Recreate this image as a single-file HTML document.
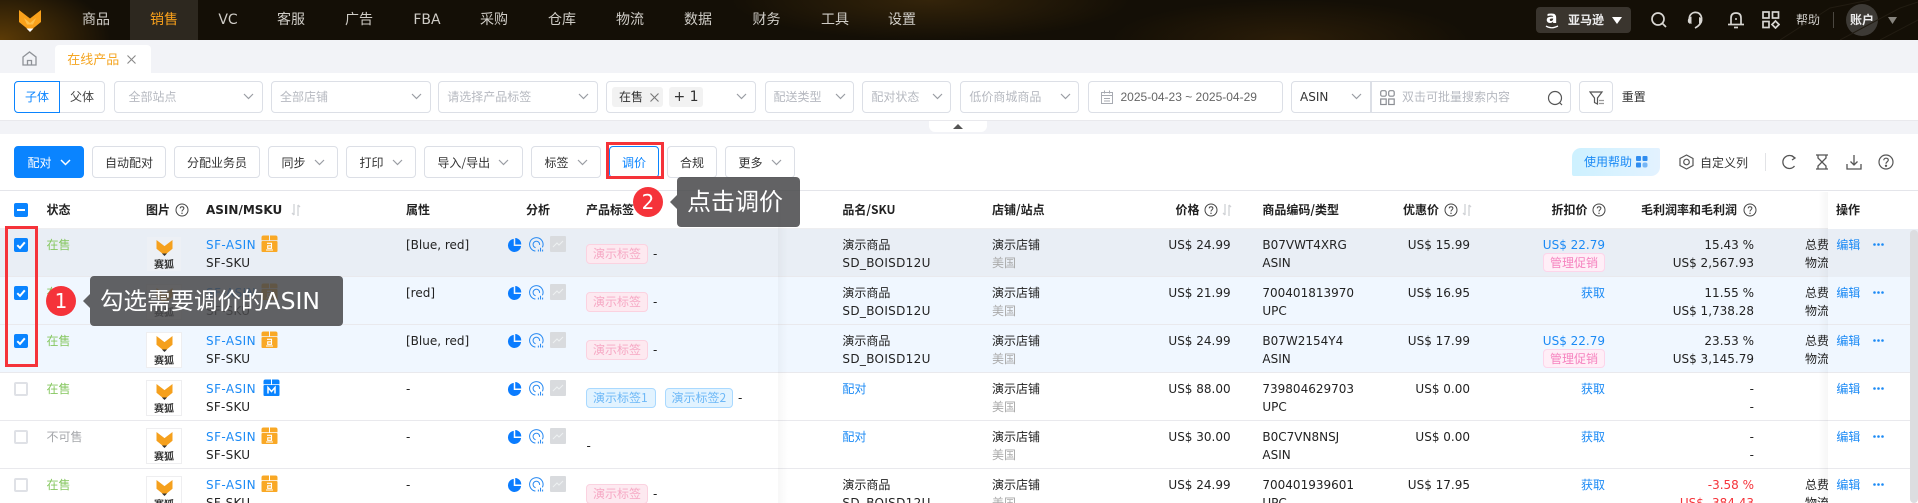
<!DOCTYPE html>
<html lang="zh">
<head>
<meta charset="utf-8">
<title>在线产品</title>
<style>
*{box-sizing:border-box}
html,body{margin:0;padding:0}
body{position:relative;width:1918px;height:503px;overflow:hidden;background:#f2f3f7;font-family:"DejaVu Sans","Noto Sans CJK SC",sans-serif;font-size:12px;color:#222}
.abs,.t,.n,.b,.f,.r,.r>*,svg.i{position:absolute}
.t{white-space:nowrap;line-height:18px}
#nav{left:0;top:0;width:1918px;height:40px;background:radial-gradient(ellipse 110px 60px at 0 40px,#5c3b06 0,rgba(92,59,6,0) 100%),radial-gradient(ellipse 200px 40px at 930px 0,#34240a 0,rgba(52,36,10,0) 100%),radial-gradient(ellipse 180px 40px at 1290px 40px,#2b1d08 0,rgba(43,29,8,0) 100%),#140f06}
.n{top:0;height:40px;line-height:40px;font-size:14px;color:#cfccc6;text-align:center;transform:translateX(-50%);white-space:nowrap}
.b{top:146px;height:32px;border:1px solid #dcdfe6;border-radius:4px;background:#fff;display:flex;align-items:center;justify-content:center;gap:8px;color:#333;font-family:"Noto Sans CJK SC",sans-serif}
.f{top:81px;height:32px;border:1px solid #dcdfe6;border-radius:4px;background:#fff;color:#b6b9c0;font-family:"Noto Sans CJK SC",sans-serif;line-height:30px}
.f span{position:absolute;white-space:nowrap}
.r{left:0;width:1918px;height:48px;border-bottom:1px solid #e9e9ed;background:#fff;overflow:hidden}
.a1{top:7px}.a2{top:25px}
.cb{left:14px;top:9px;width:14px;height:14px;border-radius:2px;background:#0a84ff}
.cb svg{position:absolute;left:0;top:0}
.ub{background:#fff;border:2px solid #dfe1e6}
.st{left:46.5px;font-family:"Noto Sans CJK SC",sans-serif;color:#86c760;top:7px;line-height:18px}
.im{left:146px;top:7px;width:36px;height:36px;background:#fff;border:1px solid #eeeef0}
.im svg{position:absolute;left:9px;top:3px}
.im b{position:absolute;left:0;width:100%;top:21px;text-align:center;font:bold 10px/12px "Noto Sans CJK SC",sans-serif;color:#333}
.lk{color:#1b8af5}
.as{left:206px}.a1.as{letter-spacing:.45px}.a2.as{letter-spacing:.25px}.at{left:406px}.nm{left:842.4px}.a2.nm{letter-spacing:.32px}.sh{left:992px}
.cn{font-family:"Noto Sans CJK SC",sans-serif}
.gy{color:#aaa}
.pr{right:687.4px}.dc{right:448px}.zk{right:313px}.ml{right:164px}.cd{left:1262.4px}.fe{left:1805px}
.tg{top:15px;height:20px;line-height:18px;border-radius:4px;font-family:"Noto Sans CJK SC",sans-serif;padding:0 6px;white-space:nowrap}
.pk{left:586px;width:62px;background:#fde9f0;border:1px solid #fbd2e0;color:#f6a8c4}
.bl{background:#e2f3ff;border:1px solid #a9d9ff;color:#6db8f7}
.da{top:16px;left:653px}
.pm{right:313px;top:23.5px;width:62px;height:19px;line-height:17px;background:#ffeef7;border:1px solid #fdd5ea;border-radius:4px;color:#f683bf;text-align:center;font-family:"Noto Sans CJK SC",sans-serif}
.p1{left:507px;top:8px}.p2{left:529px;top:8px}.p3{left:550px;top:7px}.bd{left:261px;top:6px}
.ed{left:1836.4px;top:7px;color:#1b8af5;font-family:"Noto Sans CJK SC",sans-serif;line-height:18px;z-index:3}
.mo{left:1873px;top:14px;z-index:3}
.hd{top:201px;font-weight:bold;font-family:"Noto Sans CJK SC","DejaVu Sans",sans-serif;color:#222}
.tip{background:rgba(72,72,74,.86);border-radius:4px;color:#fff;font-family:"DejaVu Sans","Noto Sans CJK SC",sans-serif;white-space:nowrap;z-index:11}
.num{width:30px;height:30px;border-radius:50%;background:#f5333a;color:#fff;text-align:center;line-height:30px;font:20px/30px "DejaVu Sans",sans-serif;z-index:11}
.red{border:3px solid #f5333a;z-index:10}
</style>
</head>
<body>
<svg width="0" height="0" style="position:absolute">
<defs>
<symbol id="fox" viewBox="0 0 22 22"><path d="M0 0L11 8.500 22 0V12L14 18.500H8L0 12Z" fill="#f9a11b"/><path d="M5 8L11 13 17 8 14 14.500H8Z" fill="#fdc04c"/><path d="M7.500 18.500H14.500L11 22Z" fill="#fff"/></symbol>
<symbol id="foxs" viewBox="0 0 22 22"><path d="M0 0L11 8.500 22 0V12L14 18.500H8L0 12Z" fill="#f5a01d"/><path d="M7.500 18.500H14.500L11 22Z" fill="#333"/></symbol>
<symbol id="ch" viewBox="0 0 11 7"><path d="M1 1L5.500 5.500 10 1" fill="none" stroke="#9a9da3" stroke-width="1.200"/></symbol>
<symbol id="chw" viewBox="0 0 11 7"><path d="M1 1L5.500 5.500 10 1" fill="none" stroke="#fff" stroke-width="1.500"/></symbol>
<symbol id="q" viewBox="0 0 14 14"><circle cx="7" cy="7" r="6" fill="none" stroke="#444" stroke-width="1"/><path d="M5.200 5.400C5.200 3.200 8.900 3.300 8.900 5.300 8.900 6.800 7 6.700 7 8.500" fill="none" stroke="#444"/><circle cx="7" cy="10.300" r=".7" fill="#444"/></symbol>
<symbol id="sort" viewBox="0 0 10 14"><path d="M3 1V12M3 12L1 10M7 13V2M7 2L9 4" fill="none" stroke="#d0d2d6" stroke-width="1.300"/></symbol>
<symbol id="pie" viewBox="0 0 16 16"><path d="M7.200 2A7 7 0 1 0 15 9.600H7.200Z" fill="#0a7cff"/><path d="M8.800 1A6.800 6.800 0 0 1 15.200 8H8.800Z" fill="#0a7cff"/></symbol>
<symbol id="gau" viewBox="0 0 16 16"><path d="M14.300 11A7.200 7.200 0 1 0 6.800 15" fill="none" stroke="#2b8bf2" stroke-width="1.100"/><path d="M11.300 8.500A3.500 3.500 0 1 0 7 11.400" fill="none" stroke="#2b8bf2" stroke-width="1.100"/><path d="M10 15.500V13.500M12.300 15.500V11.500M14.500 15.500V13.500" stroke="#2b8bf2" stroke-width="1.100"/></symbol>
<symbol id="spk" viewBox="0 0 16 16"><rect width="16" height="16" rx="1" fill="#d9dbde"/><path d="M3 11L7 7 9 9 13 5" fill="none" stroke="#eef0f2" stroke-width="1"/></symbol>
<symbol id="amz" viewBox="0 0 17 17"><path d="M.5 5.300V2.500Q.5 .5 2.500 .5H8V5.300ZM9 .5H14.500Q16.500 .5 16.500 2.500V5.300H9Z" fill="#f9a825"/><rect x=".5" y="6" width="16" height="11" rx="1" fill="#f9a825"/><path d="M6 8.300H10.500V13.300H6.700V10.800H10.300" fill="none" stroke="#fff" stroke-width="1.100"/><path d="M5 15H12" stroke="#fff" stroke-width="1"/></symbol>
<symbol id="mm" viewBox="0 0 17 17"><path d="M.5 5.300V2.500Q.5 .5 2.500 .5H8V5.300ZM9 .5H14.500Q16.500 .5 16.500 2.500V5.300H9Z" fill="#0a84ff"/><rect x=".5" y="6" width="16" height="11" rx="1" fill="#0a84ff"/><path d="M5 14.500V8.500L8.500 12.500 12 8.500V14.500" fill="none" stroke="#fff" stroke-width="1.500"/></symbol>
<symbol id="chk" viewBox="0 0 14 14"><path d="M3.300 7.200L6 9.900 10.800 4.300" fill="none" stroke="#fff" stroke-width="2"/></symbol>
<symbol id="dots" viewBox="0 0 11 3"><circle cx="1.500" cy="1.500" r="1.300" fill="#1b8af5"/><circle cx="5.500" cy="1.500" r="1.300" fill="#1b8af5"/><circle cx="9.500" cy="1.500" r="1.300" fill="#1b8af5"/></symbol>
</defs>
</svg>

<!-- NAV -->
<div class="abs" id="nav"></div>
<div class="abs" style="left:130px;top:0;width:68px;height:40px;background:#2d281f"></div>
<svg class="i" style="left:19px;top:10px" width="22" height="22"><use href="#fox"/></svg>
<div class="n" style="left:96px">商品</div>
<div class="n" style="left:164px;color:#f9a11b">销售</div>
<div class="n" style="left:228px;font-family:'DejaVu Sans',sans-serif">VC</div>
<div class="n" style="left:291px">客服</div>
<div class="n" style="left:359px">广告</div>
<div class="n" style="left:427px">FBA</div>
<div class="n" style="left:494px">采购</div>
<div class="n" style="left:562px">仓库</div>
<div class="n" style="left:630px">物流</div>
<div class="n" style="left:698px">数据</div>
<div class="n" style="left:766.500px">财务</div>
<div class="n" style="left:835px">工具</div>
<div class="n" style="left:902px">设置</div>

<div class="abs" style="left:1536px;top:7px;width:95px;height:26px;background:#3a352e;border-radius:4px"></div>
<div class="t" style="left:1546px;top:7px;font:bold 17px/22px 'DejaVu Sans',sans-serif;color:#fff">a</div>
<svg class="i" style="left:1545px;top:25px" width="14" height="5"><path d="M1 1Q6 4.500 13 1" fill="none" stroke="#fff" stroke-width="1.300"/></svg>
<div class="t" style="left:1568px;top:11px;color:#eee;font-weight:bold">亚马逊</div>
<svg class="i" style="left:1612px;top:17px" width="10" height="7"><path d="M0 0H10L5 7Z" fill="#fff"/></svg>
<svg class="i" style="left:1650px;top:11px" width="18" height="18" fill="none" stroke="#d8d6d2" stroke-width="1.700"><circle cx="8" cy="8" r="6"/><path d="M12.500 12.500L16 16"/></svg>
<svg class="i" style="left:1686px;top:10px" width="18" height="20" fill="none" stroke="#d8d6d2" stroke-width="1.700"><path d="M4 13.500Q1.500 4.500 8 2.500 14 1.500 15.500 7.500 16.500 14 9 18"/><path d="M5.500 6.500Q1 8 2 12.500L5.500 14ZM13 7Q17.500 8.500 16 12.500L13 13.500Z" fill="#d8d6d2" stroke="none"/></svg>
<svg class="i" style="left:1727px;top:10px" width="18" height="20" fill="none" stroke="#d8d6d2" stroke-width="1.700"><path d="M4 14V8Q4 3 9 3 14 3 14 8V14"/><path d="M1 14.500H17"/><path d="M7 17.500H11"/><circle cx="9" cy="9" r="1" fill="#d8d6d2" stroke="none"/></svg>
<svg class="i" style="left:1762px;top:11px" width="18" height="18" fill="none" stroke="#d8d6d2" stroke-width="1.700"><rect x="1" y="1" width="6" height="6"/><rect x="10.500" y="1" width="6" height="6"/><rect x="1" y="10.500" width="6" height="6"/><path d="M13.500 10L17 13.500 13.500 17 10 13.500Z"/></svg>
<div class="t cn" style="left:1796px;top:11px;color:#d5d3cf">帮助</div>
<div class="abs" style="left:1833px;top:12px;width:1px;height:16px;background:#4b4740"></div>
<div class="abs cn" style="left:1846px;top:4px;width:32px;height:32px;border-radius:50%;background:#3d3a35;color:#eee;text-align:center;line-height:32px;font-weight:bold">账户</div>
<svg class="i" style="left:1888px;top:17px" width="9" height="7"><path d="M0 0H9L4.500 7Z" fill="#87847e"/></svg>
<svg class="i" style="left:1780px;top:0" width="138" height="40" fill="none" stroke="#221c12"><path d="M0 40L50 8 90 0M60 40L120 8 138 2M100 40L138 20"/></svg>

<!-- TABS -->
<div class="abs" style="left:55px;top:45px;width:96px;height:28px;background:#fff;border-radius:4px 4px 0 0"></div>
<svg class="i" style="left:22px;top:51px" width="15" height="15" fill="none" stroke="#8f9298" stroke-width="1.300"><path d="M1 6L7.500 1 14 6V14H1Z"/><path d="M5.500 14V9.500H9.500V14"/></svg>
<div class="t cn" style="left:67.300px;top:50px;font-size:13px;line-height:18px;color:#f5a623">在线产品</div>
<svg class="i" style="left:127px;top:55px" width="9" height="9" stroke="#888" stroke-width="1.100"><path d="M.5 .5L8.500 8.500M8.500 .5L.5 8.500"/></svg>

<!-- FILTER BAR -->
<div class="abs" style="left:0;top:73px;width:1918px;height:48px;background:#fff;border-bottom:1px solid #e9e9ed"></div>
<div class="f" style="left:14px;width:46px;border-color:#0a84ff;border-radius:4px 0 0 4px;color:#0a84ff;text-align:center;z-index:1">子体</div>
<div class="f" style="left:59px;width:46px;border-radius:0 4px 4px 0;color:#444;text-align:center">父体</div>
<div class="f" style="left:113.500px;width:149px"><span style="left:14px">全部站点</span><svg class="i" style="left:128px;top:11px" width="11" height="7"><use href="#ch"/></svg></div>
<div class="f" style="left:271px;width:160px"><span style="left:8px">全部店铺</span><svg class="i" style="left:139px;top:11px" width="11" height="7"><use href="#ch"/></svg></div>
<div class="f" style="left:438px;width:160px"><span style="left:8.300px">请选择产品标签</span><svg class="i" style="left:139px;top:11px" width="11" height="7"><use href="#ch"/></svg></div>
<div class="f" style="left:606px;width:150px">
<span style="left:5px;top:5px;width:51px;height:20px;background:#f2f2f2;border-radius:3px;line-height:20px;color:#333;padding-left:7px">在售</span>
<svg class="i" style="left:43px;top:11px;z-index:2" width="9" height="9" stroke="#777" stroke-width="1.100"><path d="M.5 .5L8.500 8.500M8.500 .5L.5 8.500"/></svg>
<span style="left:62px;top:5px;width:34px;height:20px;background:#f2f2f2;border-radius:3px;line-height:20px;color:#333;text-align:center;font:14px/20px 'DejaVu Sans',sans-serif">+ 1</span>
<svg class="i" style="left:129px;top:11px" width="11" height="7"><use href="#ch"/></svg></div>
<div class="f" style="left:764.500px;width:89px"><span style="left:8px">配送类型</span><svg class="i" style="left:69px;top:11px" width="11" height="7"><use href="#ch"/></svg></div>
<div class="f" style="left:862.400px;width:89px"><span style="left:8px">配对状态</span><svg class="i" style="left:69px;top:11px" width="11" height="7"><use href="#ch"/></svg></div>
<div class="f" style="left:960.400px;width:119px"><span style="left:8px">低价商城商品</span><svg class="i" style="left:99px;top:11px" width="11" height="7"><use href="#ch"/></svg></div>
<div class="f" style="left:1088px;width:194.500px;color:#666"><svg class="i" style="left:11px;top:8px" width="15" height="15" fill="none" stroke="#a8abb2"><rect x="1.500" y="2.500" width="11" height="11"/><path d="M1.500 5.500H12.500M4.500 .5V3.500M9.500 .5V3.500M4 8.500H10M4 11H10"/></svg><span style="left:31.500px;font-family:'Liberation Sans',sans-serif">2025-04-23 ~ 2025-04-29</span></div>
<div class="f" style="left:1291px;width:80px;border-radius:4px 0 0 4px;color:#333"><span style="left:8px;font-family:'DejaVu Sans',sans-serif">ASIN</span><svg class="i" style="left:59px;top:11px" width="11" height="7"><use href="#ch"/></svg></div>
<div class="f" style="left:1370.500px;width:200px;border-radius:0 4px 4px 0"><svg class="i" style="left:8px;top:8px" width="15" height="16" fill="none" stroke="#8a8d93" stroke-width="1.200"><rect x=".7" y=".7" width="5.500" height="5.500" rx="1.500"/><rect x="8.700" y=".7" width="5.500" height="5.500" rx="1.500"/><rect x=".7" y="9" width="5.500" height="5.500"/><rect x="8.700" y="9" width="5.500" height="5.500"/></svg><span style="left:30.500px">双击可批量搜索内容</span><svg class="i" style="left:175px;top:8px" width="17" height="17" fill="none" stroke="#555" stroke-width="1.200"><circle cx="8" cy="8" r="6.500"/><path d="M12.500 12.500L15 15"/></svg></div>
<div class="f" style="left:1579px;width:34px"><svg class="i" style="left:9px;top:8px" width="16" height="16" fill="none" stroke="#555" stroke-width="1.200"><path d="M1 2H13L8.500 8V14L5.500 12.500V8Z"/><path d="M10 10.500H15M10 13.500H15" stroke="#999"/></svg></div>
<div class="t cn" style="left:1621.700px;top:88px;color:#333">重置</div>

<!-- collapse tab -->
<div class="abs" style="left:929px;top:121px;width:58px;height:11px;background:#fff;border-radius:0 0 6px 6px"></div>
<svg class="i" style="left:953px;top:124px" width="10" height="5"><path d="M0 5H10L5 0Z" fill="#555"/></svg>

<!-- TOOLBAR -->
<div class="abs" style="left:0;top:134px;width:1918px;height:369px;background:#fff"></div>
<div class="b" style="left:14px;width:70px;background:#0a84ff;border-color:#0a84ff;color:#fff"><span>配对</span><svg width="11" height="7"><use href="#chw"/></svg></div>
<div class="b" style="left:92px;width:74px">自动配对</div>
<div class="b" style="left:174px;width:86px">分配业务员</div>
<div class="b" style="left:268px;width:70px"><span>同步</span><svg width="11" height="7"><use href="#ch"/></svg></div>
<div class="b" style="left:346px;width:70px"><span>打印</span><svg width="11" height="7"><use href="#ch"/></svg></div>
<div class="b" style="left:424px;width:98.500px"><span>导入/导出</span><svg width="11" height="7"><use href="#ch"/></svg></div>
<div class="b" style="left:531px;width:70px"><span>标签</span><svg width="11" height="7"><use href="#ch"/></svg></div>
<div class="b" style="left:609px;width:50px;border-color:#0a84ff;color:#0a84ff">调价</div>
<div class="b" style="left:667px;width:50px">合规</div>
<div class="b" style="left:725px;width:70px"><span>更多</span><svg width="11" height="7"><use href="#ch"/></svg></div>
<div class="abs red" style="left:606px;top:142px;width:58px;height:37px"></div>

<div class="abs" style="left:1572px;top:148px;width:88px;height:28px;border-radius:9px 2px 9px 2px;background:linear-gradient(90deg,#cdf1ff,#e3f2ff)"></div>
<div class="t cn" style="left:1584px;top:153px;color:#1b8af5">使用帮助</div>
<svg class="i" style="left:1636px;top:156px" width="12" height="12" fill="#2f8df0"><rect width="5" height="5" rx="1"/><rect x="6.500" width="5" height="5" rx="1"/><rect y="6.500" width="5" height="5" rx="1"/><rect x="6.500" y="6.500" width="5" height="5" rx="2" opacity=".6"/></svg>
<svg class="i" style="left:1679px;top:154px" width="15" height="16" fill="none" stroke="#555" stroke-width="1.200"><path d="M7.500 1L14 4.500V11.500L7.500 15 1 11.500V4.500Z"/><circle cx="7.500" cy="8" r="2.800"/></svg>
<div class="t cn" style="left:1700px;top:154px;color:#333">自定义列</div>
<div class="abs" style="left:1765px;top:153px;width:1px;height:18px;background:#e2e3e6"></div>
<svg class="i" style="left:1781px;top:154px" width="16" height="16" fill="none" stroke="#555" stroke-width="1.300"><path d="M13.500 4A6.500 6.500 0 1 0 13.500 12"/><path d="M10.500 1.500L14 4 11 6"/></svg>
<svg class="i" style="left:1815px;top:154px" width="14" height="16" fill="none" stroke="#555" stroke-width="1.300"><path d="M1 1H13M1 15H13M3 1V4L11 12V15M11 1V4L3 12V15"/></svg>
<svg class="i" style="left:1846px;top:154px" width="16" height="16" fill="none" stroke="#555" stroke-width="1.300"><path d="M8 1V10.500M4.500 7.500L8 11 11.500 7.500M1 10V15H15V10"/></svg>
<svg class="i" style="left:1878px;top:154px" width="16" height="16" fill="none" stroke="#555" stroke-width="1.200"><circle cx="8" cy="8" r="7"/><path d="M5.800 6.200C5.800 3.500 10.300 3.600 10.300 6 10.300 7.800 8 7.700 8 9.800"/><circle cx="8" cy="11.800" r=".6" fill="#555"/></svg>

<!-- TABLE HEADER -->
<div class="abs" style="left:0;top:190px;width:1918px;height:39px;border-top:1px solid #e4e5ea;border-bottom:1px solid #eeeef0;background:#fff"></div>
<div class="abs" style="left:14px;top:203px;width:14px;height:14px;background:#0a84ff;border-radius:2px"></div>
<div class="abs" style="left:17px;top:209px;width:8px;height:2px;background:#fff"></div>
<div class="t hd" style="left:46.500px">状态</div>
<div class="t hd" style="left:146px">图片</div><svg class="i" style="left:175px;top:203px" width="14" height="14"><use href="#q"/></svg>
<div class="t hd" style="left:206px;font-family:'DejaVu Sans',sans-serif;font-size:12px">ASIN/MSKU</div><svg class="i" style="left:291px;top:203px" width="10" height="14"><use href="#sort"/></svg>
<div class="t hd" style="left:406px">属性</div>
<div class="t hd" style="left:526px">分析</div>
<div class="t hd" style="left:586px">产品标签</div>
<div class="t hd" style="left:842.400px">品名/SKU</div>
<div class="t hd" style="left:992px">店铺/站点</div>
<div class="t hd" style="left:1175.500px">价格</div><svg class="i" style="left:1204px;top:203px" width="14" height="14"><use href="#q"/></svg><svg class="i" style="left:1222px;top:203px" width="10" height="14"><use href="#sort"/></svg>
<div class="t hd" style="left:1262.400px">商品编码/类型</div>
<div class="t hd" style="left:1403px">优惠价</div><svg class="i" style="left:1444px;top:203px" width="14" height="14"><use href="#q"/></svg><svg class="i" style="left:1462px;top:203px" width="10" height="14"><use href="#sort"/></svg>
<div class="t hd" style="left:1551.500px">折扣价</div><svg class="i" style="left:1592px;top:203px" width="14" height="14"><use href="#q"/></svg>
<div class="t hd" style="left:1641px">毛利润率和毛利润</div><svg class="i" style="left:1742.500px;top:203px" width="14" height="14"><use href="#q"/></svg>

<!-- ROW 1 -->
<div class="r" style="top:229px;background:#e9eef5">
<div class="cb"><svg width="14" height="14"><use href="#chk"/></svg></div>
<div class="st">在售</div>
<div class="im" style="background:#edf0f5;border-color:#e9eef5"><svg width="17" height="16"><use href="#foxs"/></svg><b>赛狐</b></div>
<div class="t as a1 lk">SF-ASIN</div><svg class="i bd" width="17" height="17"><use href="#amz"/></svg><div class="t as a2">SF-SKU</div>
<div class="t at a1">[Blue, red]</div>
<svg class="i p1" width="15" height="15"><use href="#pie"/></svg><svg class="i p2" width="15" height="15"><use href="#gau"/></svg><svg class="i p3" width="16" height="16"><use href="#spk"/></svg>
<div class="tg pk">演示标签</div><div class="t da">-</div>
<div class="t nm a1 cn">演示商品</div><div class="t nm a2">SD_BOISD12U</div>
<div class="t sh a1 cn">演示店铺</div><div class="t sh a2 cn gy">美国</div>
<div class="t pr a1">US$ 24.99</div>
<div class="t cd a1">B07VWT4XRG</div><div class="t cd a2">ASIN</div>
<div class="t dc a1">US$ 15.99</div>
<div class="t zk a1 lk">US$ 22.79</div><div class="abs pm">管理促销</div>
<div class="t ml a1">15.43 %</div><div class="t ml a2">US$ 2,567.93</div>
<div class="t fe a1 cn">总费</div><div class="t fe a2 cn">物流</div>
</div>
<!-- ROW 2 -->
<div class="r" style="top:277px;background:#f0f7ff">
<div class="cb"><svg width="14" height="14"><use href="#chk"/></svg></div>
<div class="st">在售</div>
<div class="im"><svg width="17" height="16"><use href="#foxs"/></svg><b>赛狐</b></div>
<div class="t as a1 lk">SF-ASIN</div><svg class="i bd" width="17" height="17"><use href="#amz"/></svg><div class="t as a2">SF-SKU</div>
<div class="t at a1">[red]</div>
<svg class="i p1" width="15" height="15"><use href="#pie"/></svg><svg class="i p2" width="15" height="15"><use href="#gau"/></svg><svg class="i p3" width="16" height="16"><use href="#spk"/></svg>
<div class="tg pk">演示标签</div><div class="t da">-</div>
<div class="t nm a1 cn">演示商品</div><div class="t nm a2">SD_BOISD12U</div>
<div class="t sh a1 cn">演示店铺</div><div class="t sh a2 cn gy">美国</div>
<div class="t pr a1">US$ 21.99</div>
<div class="t cd a1">700401813970</div><div class="t cd a2">UPC</div>
<div class="t dc a1">US$ 16.95</div>
<div class="t zk a1 lk cn">获取</div>
<div class="t ml a1">11.55 %</div><div class="t ml a2">US$ 1,738.28</div>
<div class="t fe a1 cn">总费</div><div class="t fe a2 cn">物流</div>
</div>
<!-- ROW 3 -->
<div class="r" style="top:325px;background:#f0f7ff">
<div class="cb"><svg width="14" height="14"><use href="#chk"/></svg></div>
<div class="st">在售</div>
<div class="im"><svg width="17" height="16"><use href="#foxs"/></svg><b>赛狐</b></div>
<div class="t as a1 lk">SF-ASIN</div><svg class="i bd" width="17" height="17"><use href="#amz"/></svg><div class="t as a2">SF-SKU</div>
<div class="t at a1">[Blue, red]</div>
<svg class="i p1" width="15" height="15"><use href="#pie"/></svg><svg class="i p2" width="15" height="15"><use href="#gau"/></svg><svg class="i p3" width="16" height="16"><use href="#spk"/></svg>
<div class="tg pk">演示标签</div><div class="t da">-</div>
<div class="t nm a1 cn">演示商品</div><div class="t nm a2">SD_BOISD12U</div>
<div class="t sh a1 cn">演示店铺</div><div class="t sh a2 cn gy">美国</div>
<div class="t pr a1">US$ 24.99</div>
<div class="t cd a1">B07W2154Y4</div><div class="t cd a2">ASIN</div>
<div class="t dc a1">US$ 17.99</div>
<div class="t zk a1 lk">US$ 22.79</div><div class="abs pm">管理促销</div>
<div class="t ml a1">23.53 %</div><div class="t ml a2">US$ 3,145.79</div>
<div class="t fe a1 cn">总费</div><div class="t fe a2 cn">物流</div>
</div>
<!-- ROW 4 -->
<div class="r" style="top:373px">
<div class="cb ub"></div>
<div class="st">在售</div>
<div class="im"><svg width="17" height="16"><use href="#foxs"/></svg><b>赛狐</b></div>
<div class="t as a1 lk">SF-ASIN</div><svg class="i bd" style="left:262.500px" width="17" height="17"><use href="#mm"/></svg><div class="t as a2">SF-SKU</div>
<div class="t at a1">-</div>
<svg class="i p1" width="15" height="15"><use href="#pie"/></svg><svg class="i p2" width="15" height="15"><use href="#gau"/></svg><svg class="i p3" width="16" height="16"><use href="#spk"/></svg>
<div class="tg bl" style="left:586px;width:69.500px">演示标签1</div><div class="tg bl" style="left:664.500px;width:68px">演示标签2</div><div class="t da" style="left:738px">-</div>
<div class="t nm a1 cn lk">配对</div>
<div class="t sh a1 cn">演示店铺</div><div class="t sh a2 cn gy">美国</div>
<div class="t pr a1">US$ 88.00</div>
<div class="t cd a1">739804629703</div><div class="t cd a2">UPC</div>
<div class="t dc a1">US$ 0.00</div>
<div class="t zk a1 lk cn">获取</div>
<div class="t ml a1">-</div><div class="t ml a2">-</div>
</div>
<!-- ROW 5 -->
<div class="r" style="top:421px">
<div class="cb ub"></div>
<div class="st" style="color:#a5a7ab">不可售</div>
<div class="im"><svg width="17" height="16"><use href="#foxs"/></svg><b>赛狐</b></div>
<div class="t as a1 lk">SF-ASIN</div><svg class="i bd" width="17" height="17"><use href="#amz"/></svg><div class="t as a2">SF-SKU</div>
<div class="t at a1">-</div>
<svg class="i p1" width="15" height="15"><use href="#pie"/></svg><svg class="i p2" width="15" height="15"><use href="#gau"/></svg><svg class="i p3" width="16" height="16"><use href="#spk"/></svg>
<div class="t" style="left:586.500px;top:16px">-</div>
<div class="t nm a1 cn lk">配对</div>
<div class="t sh a1 cn">演示店铺</div><div class="t sh a2 cn gy">美国</div>
<div class="t pr a1">US$ 30.00</div>
<div class="t cd a1">B0C7VN8NSJ</div><div class="t cd a2">ASIN</div>
<div class="t dc a1">US$ 0.00</div>
<div class="t zk a1 lk cn">获取</div>
<div class="t ml a1">-</div><div class="t ml a2">-</div>
</div>
<!-- ROW 6 -->
<div class="r" style="top:469px;height:34px;border-bottom:0">
<div class="cb ub"></div>
<div class="st">在售</div>
<div class="im"><svg width="17" height="16"><use href="#foxs"/></svg><b>赛狐</b></div>
<div class="t as a1 lk">SF-ASIN</div><svg class="i bd" width="17" height="17"><use href="#amz"/></svg><div class="t as a2">SF-SKU</div>
<div class="t at a1">-</div>
<svg class="i p1" width="15" height="15"><use href="#pie"/></svg><svg class="i p2" width="15" height="15"><use href="#gau"/></svg><svg class="i p3" width="16" height="16"><use href="#spk"/></svg>
<div class="tg pk">演示标签</div><div class="t da">-</div>
<div class="t nm a1 cn">演示商品</div><div class="t nm a2">SD_BOISD12U</div>
<div class="t sh a1 cn">演示店铺</div><div class="t sh a2 cn gy">美国</div>
<div class="t pr a1">US$ 24.99</div>
<div class="t cd a1">700401939601</div><div class="t cd a2">UPC</div>
<div class="t dc a1">US$ 17.95</div>
<div class="t zk a1 lk cn">获取</div>
<div class="t ml a1" style="color:#f5333a">-3.58 %</div><div class="t ml a2" style="color:#f5333a">US$ -384.43</div>
<div class="t fe a1 cn">总费</div><div class="t fe a2 cn">物流</div>
</div>

<!-- fixed column shadows -->
<div class="abs" style="left:778px;top:191px;width:10px;height:312px;background:linear-gradient(90deg,rgba(0,0,0,.03),rgba(0,0,0,0));z-index:4"></div>
<div class="abs" style="left:1828px;top:192px;width:90px;height:37px;background:#fff;z-index:2"></div>
<div class="abs" style="left:1828px;top:229px;width:90px;height:48px;background:#e9eef5;z-index:2"></div>
<div class="abs" style="left:1828px;top:277px;width:90px;height:96px;background:#f0f7ff;z-index:2"></div>
<div class="abs" style="left:1828px;top:373px;width:90px;height:130px;background:#fff;z-index:2"></div>
<div class="abs" style="left:1828px;top:324px;width:90px;height:1px;background:#e9e9ed;z-index:2"></div>
<div class="abs" style="left:1828px;top:372px;width:90px;height:1px;background:#e9e9ed;z-index:2"></div>
<div class="abs" style="left:1828px;top:420px;width:90px;height:1px;background:#e9e9ed;z-index:2"></div>
<div class="abs" style="left:1828px;top:468px;width:90px;height:1px;background:#e9e9ed;z-index:2"></div>
<div class="abs" style="left:1818px;top:192px;width:10px;height:311px;background:linear-gradient(270deg,rgba(0,0,0,.035),rgba(0,0,0,0));z-index:2"></div>
<div class="t hd" style="left:1836px;z-index:3">操作</div>
<div class="abs ed" style="top:236px">编辑</div><svg class="i mo" style="top:243px" width="11" height="3"><use href="#dots"/></svg>
<div class="abs ed" style="top:284px">编辑</div><svg class="i mo" style="top:291px" width="11" height="3"><use href="#dots"/></svg>
<div class="abs ed" style="top:332px">编辑</div><svg class="i mo" style="top:339px" width="11" height="3"><use href="#dots"/></svg>
<div class="abs ed" style="top:380px">编辑</div><svg class="i mo" style="top:387px" width="11" height="3"><use href="#dots"/></svg>
<div class="abs ed" style="top:428px">编辑</div><svg class="i mo" style="top:435px" width="11" height="3"><use href="#dots"/></svg>
<div class="abs ed" style="top:476px">编辑</div><svg class="i mo" style="top:483px" width="11" height="3"><use href="#dots"/></svg>
<div class="abs" style="left:1910px;top:230px;width:8px;height:273px;background:#dcdde0;border-radius:4px;z-index:5"></div>

<!-- ANNOTATIONS -->
<div class="abs red" style="left:5px;top:226px;width:33px;height:141px"></div>
<div class="abs num" style="left:46px;top:286px">1</div>
<div class="abs" style="left:83px;top:294px;width:0;height:0;border:7px solid transparent;border-left:0;border-right:7px solid rgba(72,72,74,.86);z-index:11"></div>
<div class="abs tip" style="left:90px;top:276px;width:253px;height:50px;line-height:50px;font-size:23.500px;padding-left:10px">勾选需要调价的ASIN</div>
<div class="abs num" style="left:633px;top:187px">2</div>
<div class="abs" style="left:670px;top:195px;width:0;height:0;border:7px solid transparent;border-left:0;border-right:7px solid rgba(72,72,74,.86);z-index:11"></div>
<div class="abs tip" style="left:677px;top:177px;width:123px;height:50px;line-height:50px;font-size:24px;padding-left:10px">点击调价</div>
</body>
</html>
